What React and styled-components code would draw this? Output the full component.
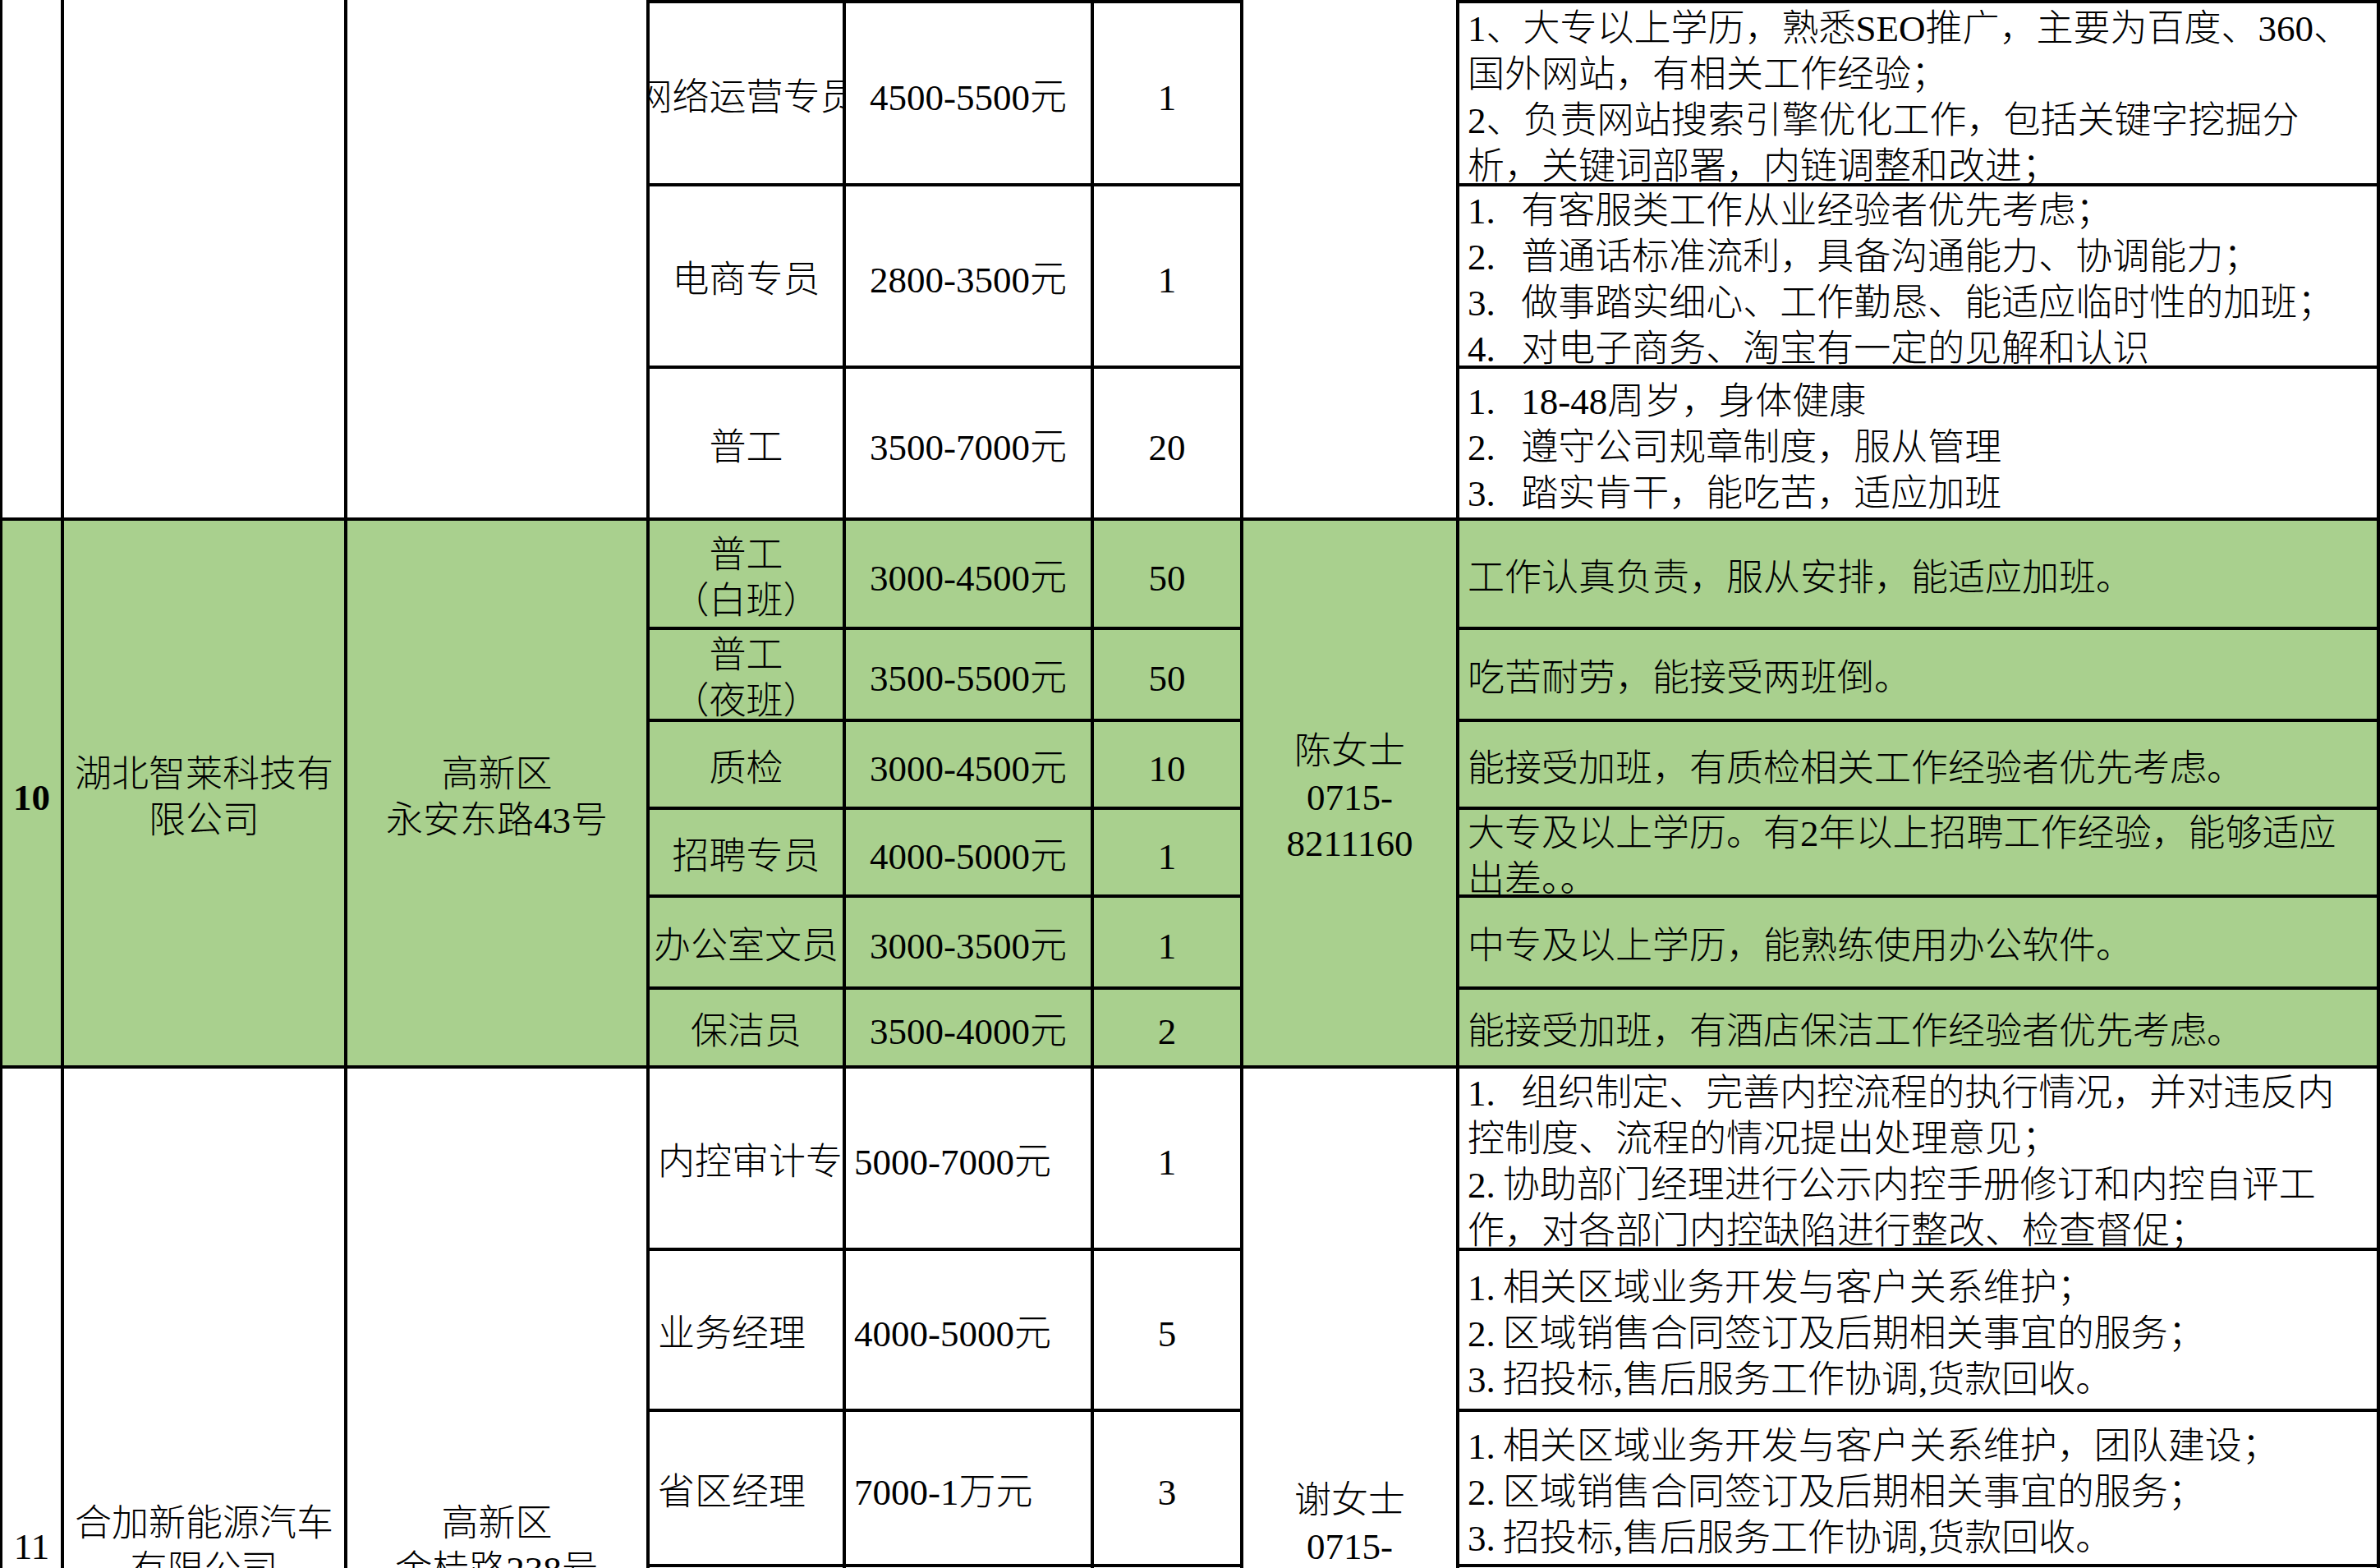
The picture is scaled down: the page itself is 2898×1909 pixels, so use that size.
import React from "react";
import styled, { createGlobalStyle } from "styled-components";

const GREEN = "#a9d08e";

const GlobalStyle = createGlobalStyle`
  html, body {
    margin: 0;
    padding: 0;
    background: #fff;
    overflow: hidden;
  }
  body {
    font-family: "Liberation Serif", "Noto Sans CJK SC", serif;
    color: #000;
  }
`;

const Sheet = styled.div`
  width: 2898px;
  height: 1909px;
  box-sizing: border-box;
  overflow: hidden;
  display: flex;
  flex-direction: column;
  gap: 4px;
  padding: 0 4px 0 3px;
  background: #000;
`;

const Section = styled.div`
  flex-shrink: 0;
  display: grid;
  grid-template-columns: 71px 341px 364px 235px 298px 178px 259px 1fr;
  grid-template-rows: ${(p) => p.$rows.map((r) => `${r}px`).join(" ")};
  gap: 4px;
`;

const Cell = styled.div`
  grid-column: ${(p) => p.$col};
  grid-row: ${(p) => p.$row};
  background: ${(p) => p.$bg};
  box-sizing: border-box;
  display: flex;
  flex-direction: column;
  justify-content: center;
  align-items: ${(p) => (p.$left ? "flex-start" : "center")};
  padding: 10px 0 0 ${(p) => (p.$left ? "10px" : "0")};
  overflow: hidden;
  min-width: 0;
  min-height: 0;
  font-size: 45px;
  line-height: 56px;
  font-weight: ${(p) => (p.$bold ? 700 : 300)};
`;

const Line = styled.div`
  flex-shrink: 0;
  white-space: pre;
`;

const sp = "\u2002\u2009";

const sections = [
  {
    id: "9",
    bg: "#fff",
    rows: [0, 219, 218, 181],
    first: 2,
    index: "",
    company: [],
    address: [],
    contact: [],
    leftJobs: false,
    jobs: [
      {
        title: ["网络运营专员"],
        pay: "4500-5500元",
        count: "1",
        req: [
          "1、大专以上学历，熟悉SEO推广，主要为百度、360、",
          "国外网站，有相关工作经验；",
          "2、负责网站搜索引擎优化工作，包括关键字挖掘分",
          "析，关键词部署，内链调整和改进；",
        ],
      },
      {
        title: ["电商专员"],
        pay: "2800-3500元",
        count: "1",
        req: [
          `1.${sp}有客服类工作从业经验者优先考虑；`,
          `2.${sp}普通话标准流利，具备沟通能力、协调能力；`,
          `3.${sp}做事踏实细心、工作勤恳、能适应临时性的加班；`,
          `4.${sp}对电子商务、淘宝有一定的见解和认识`,
        ],
      },
      {
        title: ["普工"],
        pay: "3500-7000元",
        count: "20",
        req: [
          `1.${sp}18-48周岁，身体健康`,
          `2.${sp}遵守公司规章制度，服从管理`,
          `3.${sp}踏实肯干，能吃苦，适应加班`,
        ],
      },
    ],
  },
  {
    id: "10",
    bg: GREEN,
    rows: [129, 108, 103, 103, 108, 92],
    first: 1,
    index: "10",
    bold: true,
    company: ["湖北智莱科技有", "限公司"],
    address: ["高新区", "永安东路43号"],
    contact: ["陈女士", "0715-", "8211160"],
    leftJobs: false,
    jobs: [
      { title: ["普工", "（白班）"], pay: "3000-4500元", count: "50", req: ["工作认真负责，服从安排，能适应加班。"] },
      { title: ["普工", "（夜班）"], pay: "3500-5500元", count: "50", req: ["吃苦耐劳，能接受两班倒。"] },
      { title: ["质检"], pay: "3000-4500元", count: "10", req: ["能接受加班，有质检相关工作经验者优先考虑。"] },
      {
        title: ["招聘专员"],
        pay: "4000-5000元",
        count: "1",
        req: ["大专及以上学历。有2年以上招聘工作经验，能够适应", "出差。。"],
      },
      { title: ["办公室文员"], pay: "3000-3500元", count: "1", req: ["中专及以上学历，能熟练使用办公软件。"] },
      { title: ["保洁员"], pay: "3500-4000元", count: "2", req: ["能接受加班，有酒店保洁工作经验者优先考虑。"] },
    ],
  },
  {
    id: "11",
    bg: "#fff",
    rows: [218, 192, 185, 547],
    first: 1,
    index: "11",
    company: ["合加新能源汽车", "有限公司"],
    address: ["高新区", "金桂路238号"],
    contact: ["谢女士", "0715-", "3560666"],
    leftJobs: true,
    jobs: [
      {
        title: ["内控审计专员"],
        pay: "5000-7000元",
        count: "1",
        req: [
          `1.${sp}组织制定、完善内控流程的执行情况，并对违反内`,
          "控制度、流程的情况提出处理意见；",
          "2.\u2009协助部门经理进行公示内控手册修订和内控自评工",
          "作，对各部门内控缺陷进行整改、检查督促；",
        ],
      },
      {
        title: ["业务经理"],
        pay: "4000-5000元",
        count: "5",
        req: [
          "1.\u2009相关区域业务开发与客户关系维护；",
          "2.\u2009区域销售合同签订及后期相关事宜的服务；",
          "3.\u2009招投标,售后服务工作协调,货款回收。",
        ],
      },
      {
        title: ["省区经理"],
        pay: "7000-1万元",
        count: "3",
        req: [
          "1.\u2009相关区域业务开发与客户关系维护，团队建设；",
          "2.\u2009区域销售合同签订及后期相关事宜的服务；",
          "3.\u2009招投标,售后服务工作协调,货款回收。",
        ],
      },
      { title: [], pay: "", count: "", req: [] },
    ],
  },
];

function Lines({ items }) {
  return items.map((t, i) => <Line key={i}>{t}</Line>);
}

function Company({ data }) {
  const span = "1 / -1";
  return (
    <Section $rows={data.rows}>
      <Cell $col={1} $row={span} $bg={data.bg} $bold={data.bold}>
        <Line>{data.index}</Line>
      </Cell>
      <Cell $col={2} $row={span} $bg={data.bg}>
        <Lines items={data.company} />
      </Cell>
      <Cell $col={3} $row={span} $bg={data.bg}>
        <Lines items={data.address} />
      </Cell>
      <Cell $col={7} $row={span} $bg={data.bg}>
        <Lines items={data.contact} />
      </Cell>
      {data.jobs.map((job, i) => {
        const row = data.first + i;
        return (
          <React.Fragment key={i}>
            <Cell $col={4} $row={row} $bg={data.bg} $left={data.leftJobs}>
              <Lines items={job.title} />
            </Cell>
            <Cell $col={5} $row={row} $bg={data.bg} $left={data.leftJobs}>
              <Line>{job.pay}</Line>
            </Cell>
            <Cell $col={6} $row={row} $bg={data.bg}>
              <Line>{job.count}</Line>
            </Cell>
            <Cell $col={8} $row={row} $bg={data.bg} $left>
              <Lines items={job.req} />
            </Cell>
          </React.Fragment>
        );
      })}
    </Section>
  );
}

export default function App() {
  return (
    <>
      <GlobalStyle />
      <Sheet>
        {sections.map((s) => (
          <Company key={s.id} data={s} />
        ))}
      </Sheet>
    </>
  );
}
